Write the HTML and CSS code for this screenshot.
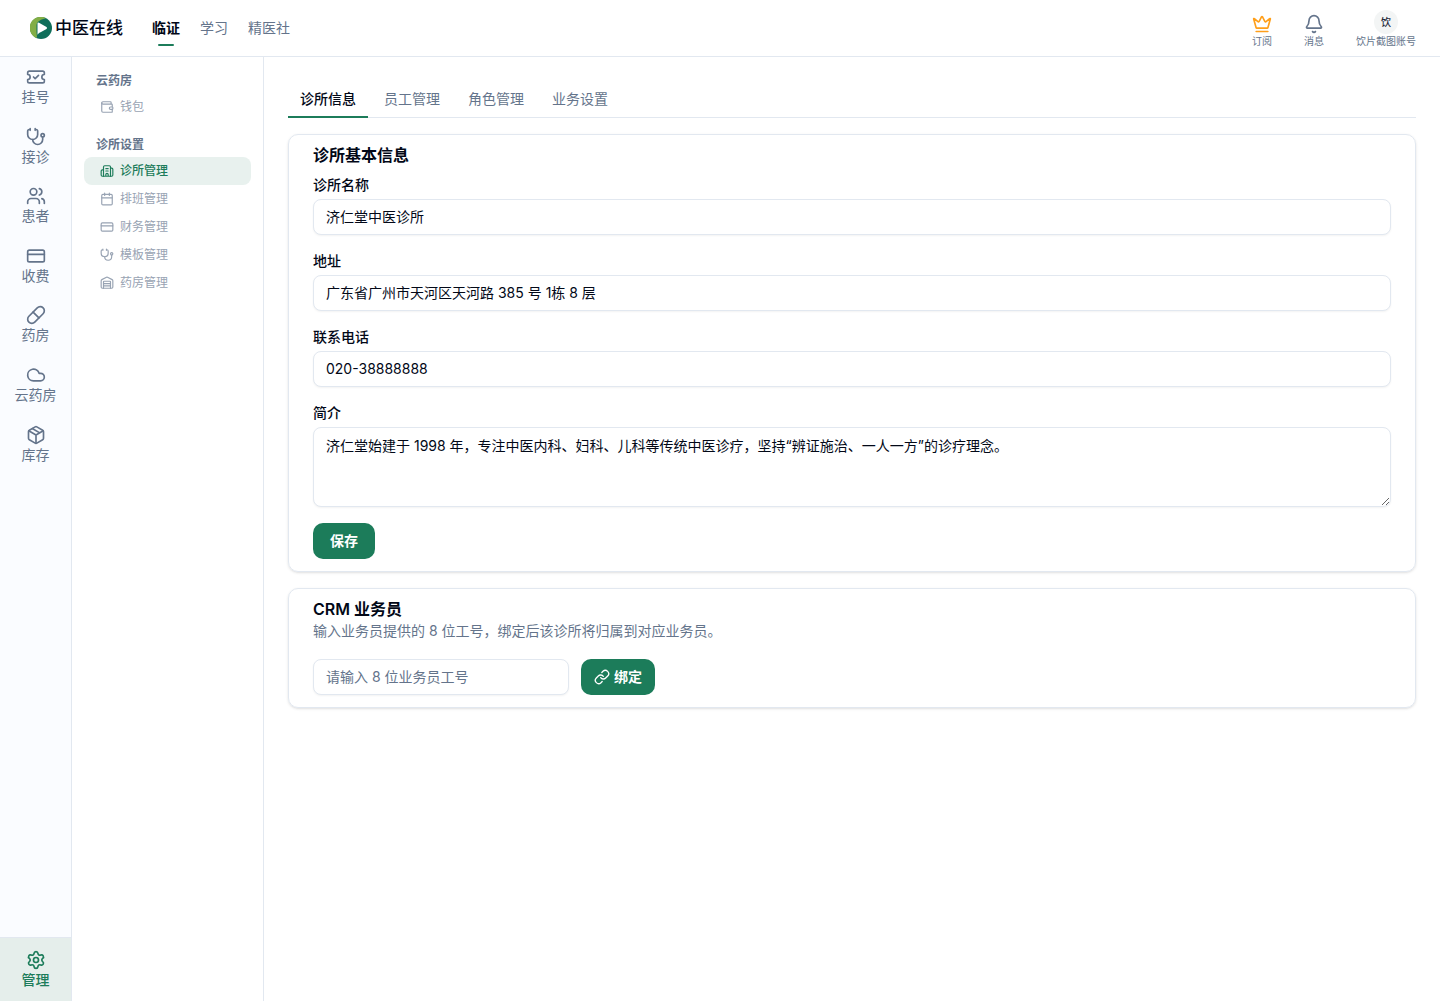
FILE: index.html
```html
<!DOCTYPE html>
<html lang="zh-CN">
<head>
<meta charset="utf-8">
<meta name="viewport" content="width=device-width, initial-scale=1">
<title>中医在线</title>
<link rel="stylesheet" href="styles.css">
</head>
<body>
<svg class="sprite" aria-hidden="true">
  <symbol id="i-ticket" viewBox="0 0 24 24"><path d="M2 9a3 3 0 1 1 0 6v2a2 2 0 0 0 2 2h16a2 2 0 0 0 2-2v-2a3 3 0 1 1 0-6V7a2 2 0 0 0-2-2H4a2 2 0 0 0-2 2Z"/><path d="m9 12 2 2 4-4"/></symbol>
  <symbol id="i-steth" viewBox="0 0 24 24"><path d="M11 2v2M5 2v2M5 3H4a2 2 0 0 0-2 2v4a6 6 0 0 0 12 0V5a2 2 0 0 0-2-2h-1"/><path d="M8 15a6 6 0 0 0 12 0v-3"/><circle cx="20" cy="10" r="2"/></symbol>
  <symbol id="i-users" viewBox="0 0 24 24"><path d="M16 21v-2a4 4 0 0 0-4-4H6a4 4 0 0 0-4 4v2"/><circle cx="9" cy="7" r="4"/><path d="M16 3.128a4 4 0 0 1 0 7.744M22 21v-2a4 4 0 0 0-3-3.87" /></symbol>
  <symbol id="i-card" viewBox="0 0 24 24"><rect x="2" y="5" width="20" height="14" rx="2"/><path d="M2 10h20"/></symbol>
  <symbol id="i-pill" viewBox="0 0 24 24"><path d="m10.5 20.5 10-10a4.95 4.95 0 1 0-7-7l-10 10a4.95 4.95 0 1 0 7 7Z"/><path d="m8.5 8.5 7 7"/></symbol>
  <symbol id="i-cloud" viewBox="0 0 24 24"><path d="M17.5 19H9a7 7 0 1 1 6.71-9h1.79a4.5 4.5 0 1 1 0 9Z"/></symbol>
  <symbol id="i-package" viewBox="0 0 24 24"><path d="M11 21.73a2 2 0 0 0 2 0l7-4A2 2 0 0 0 21 16V8a2 2 0 0 0-1-1.73l-7-4a2 2 0 0 0-2 0l-7 4A2 2 0 0 0 3 8v8a2 2 0 0 0 1 1.73z"/><path d="M12 22V12M3.29 7 12 12l8.71-5M7.5 4.27l9 5.15"/></symbol>
  <symbol id="i-settings" viewBox="0 0 24 24"><path d="M9.671 4.136a2.34 2.34 0 0 1 4.659 0 2.34 2.34 0 0 0 3.319 1.915 2.34 2.34 0 0 1 2.33 4.033 2.34 2.34 0 0 0 0 3.831 2.34 2.34 0 0 1-2.33 4.033 2.34 2.34 0 0 0-3.319 1.915 2.34 2.34 0 0 1-4.659 0 2.34 2.34 0 0 0-3.32-1.915 2.34 2.34 0 0 1-2.33-4.033 2.34 2.34 0 0 0 0-3.831A2.34 2.34 0 0 1 6.35 6.051a2.34 2.34 0 0 0 3.319-1.915"/><circle cx="12" cy="12" r="3"/></symbol>
  <symbol id="i-wallet" viewBox="0 0 24 24"><path d="M19 7V4a1 1 0 0 0-1-1H5a2 2 0 0 0 0 4h15a1 1 0 0 1 1 1v4h-3a2 2 0 0 0 0 4h3a1 1 0 0 0 1-1v-2a1 1 0 0 0-1-1"/><path d="M3 5v14a2 2 0 0 0 2 2h15a1 1 0 0 0 1-1v-4"/></symbol>
  <symbol id="i-building" viewBox="0 0 24 24"><path d="M10 12h4M10 8h4M14 21v-3a2 2 0 0 0-4 0v3M6 10H4a2 2 0 0 0-2 2v7a2 2 0 0 0 2 2h16a2 2 0 0 0 2-2V9a2 2 0 0 0-2-2h-2"/><path d="M6 21V5a2 2 0 0 1 2-2h8a2 2 0 0 1 2 2v16"/></symbol>
  <symbol id="i-calendar" viewBox="0 0 24 24"><path d="M8 2v4M16 2v4M3 10h18"/><rect x="3" y="4" width="18" height="18" rx="2"/></symbol>
  <symbol id="i-warehouse" viewBox="0 0 24 24"><path d="M18 21V10a1 1 0 0 0-1-1H7a1 1 0 0 0-1 1v11"/><path d="M22 19a2 2 0 0 1-2 2H4a2 2 0 0 1-2-2V8a2 2 0 0 1 1.132-1.803l7.95-3.974a2 2 0 0 1 1.837 0l7.948 3.974A2 2 0 0 1 22 8z"/><path d="M6 13h12M6 17h12"/></symbol>
  <symbol id="i-crown" viewBox="0 0 24 24"><path d="M11.562 3.266a.5.5 0 0 1 .876 0L15.39 8.87a1 1 0 0 0 1.516.294L21.183 5.5a.5.5 0 0 1 .798.519l-2.834 10.246a1 1 0 0 1-.956.734H5.81a1 1 0 0 1-.957-.734L2.02 6.02a.5.5 0 0 1 .798-.519l4.276 3.664a1 1 0 0 0 1.516-.294z"/><path d="M5 21h14"/></symbol>
  <symbol id="i-bell" viewBox="0 0 24 24"><path d="M10.268 21a2 2 0 0 0 3.464 0"/><path d="M3.262 15.326A1 1 0 0 0 4 17h16a1 1 0 0 0 .74-1.673C19.41 13.956 18 12.499 18 8A6 6 0 0 0 6 8c0 4.499-1.411 5.956-2.738 7.326"/></symbol>
  <symbol id="i-link" viewBox="0 0 24 24"><path d="M10 13a5 5 0 0 0 7.54.54l3-3a5 5 0 0 0-7.07-7.07l-1.72 1.71"/><path d="M14 11a5 5 0 0 0-7.54-.54l-3 3a5 5 0 0 0 7.07 7.07l1.71-1.71"/></symbol>
</svg>

<header class="topbar">
  <a class="brand" href="#">
    <svg class="brand-logo" viewBox="1 1 22 22" aria-hidden="true">
      <circle cx="12" cy="12" r="11" fill="#0f6e5a"/>
      <path d="M17 2.200A11 11 0 1 0 7.500 22C8.500 20.500 7.500 18.500 7.500 16V9C8 5.500 12 3 17 2.200Z" fill="#82ae46"/>
      <path d="M8.500 7.600Q8.500 6 10 6.700L17.500 11Q18.700 12 17.500 13L12.500 15.800Q9.500 17 8.500 18.800Z" fill="#fff"/>
    </svg>
    <span>中医在线</span>
  </a>
  <nav class="topnav" aria-label="主导航">
    <a class="topnav-link is-active" href="#">临证</a>
    <a class="topnav-link" href="#">学习</a>
    <a class="topnav-link" href="#">精医社</a>
  </nav>
  <div class="actions">
    <button class="action" type="button"><svg class="icon icon-lg gold"><use href="#i-crown"/></svg><span>订阅</span></button>
    <button class="action" type="button"><svg class="icon icon-lg"><use href="#i-bell"/></svg><span>消息</span></button>
    <button class="action" type="button"><span class="avatar">饮</span><span>饮片截图账号</span></button>
  </div>
</header>

<div class="shell">
  <nav class="rail" aria-label="功能">
    <a class="rail-link" href="#"><svg class="icon icon-lg"><use href="#i-ticket"/></svg>挂号</a>
    <a class="rail-link" href="#"><svg class="icon icon-lg"><use href="#i-steth"/></svg>接诊</a>
    <a class="rail-link" href="#"><svg class="icon icon-lg"><use href="#i-users"/></svg>患者</a>
    <a class="rail-link" href="#"><svg class="icon icon-lg"><use href="#i-card"/></svg>收费</a>
    <a class="rail-link" href="#"><svg class="icon icon-lg"><use href="#i-pill"/></svg>药房</a>
    <a class="rail-link" href="#"><svg class="icon icon-lg"><use href="#i-cloud"/></svg>云药房</a>
    <a class="rail-link" href="#"><svg class="icon icon-lg"><use href="#i-package"/></svg>库存</a>
    <a class="rail-link rail-manage" href="#"><svg class="icon icon-lg"><use href="#i-settings"/></svg>管理</a>
  </nav>

  <nav class="side" aria-label="管理">
    <section class="side-group">
      <h2 class="side-title">云药房</h2>
      <a class="side-link" href="#"><svg class="icon icon-sm"><use href="#i-wallet"/></svg>钱包</a>
    </section>
    <section class="side-group">
      <h2 class="side-title">诊所设置</h2>
      <a class="side-link is-active" href="#"><svg class="icon icon-sm"><use href="#i-building"/></svg>诊所管理</a>
      <a class="side-link" href="#"><svg class="icon icon-sm"><use href="#i-calendar"/></svg>排班管理</a>
      <a class="side-link" href="#"><svg class="icon icon-sm"><use href="#i-card"/></svg>财务管理</a>
      <a class="side-link" href="#"><svg class="icon icon-sm"><use href="#i-steth"/></svg>模板管理</a>
      <a class="side-link" href="#"><svg class="icon icon-sm"><use href="#i-warehouse"/></svg>药房管理</a>
    </section>
  </nav>

  <main class="main">
    <div class="tabs" role="tablist">
      <button class="tab is-active" type="button" role="tab" aria-selected="true">诊所信息</button>
      <button class="tab" type="button" role="tab" aria-selected="false">员工管理</button>
      <button class="tab" type="button" role="tab" aria-selected="false">角色管理</button>
      <button class="tab" type="button" role="tab" aria-selected="false">业务设置</button>
    </div>

    <form class="card">
      <h1 class="card-title">诊所基本信息</h1>
      <div class="fields">
        <div class="field">
          <label for="name">诊所名称</label>
          <input class="control" id="name" type="text" value="济仁堂中医诊所">
        </div>
        <div class="field">
          <label for="address">地址</label>
          <input class="control" id="address" type="text" value="广东省广州市天河区天河路 385 号 1栋 8 层">
        </div>
        <div class="field">
          <label for="phone">联系电话</label>
          <input class="control" id="phone" type="tel" value="020-38888888">
        </div>
        <div class="field">
          <label for="intro">简介</label>
          <textarea class="control control-area" id="intro">济仁堂始建于 1998 年，专注中医内科、妇科、儿科等传统中医诊疗，坚持“辨证施治、一人一方”的诊疗理念。</textarea>
        </div>
        <button class="btn" type="submit">保存</button>
      </div>
    </form>

    <form class="card">
      <h2 class="card-title">CRM 业务员</h2>
      <p class="card-desc" id="crm-desc">输入业务员提供的 8 位工号，绑定后该诊所将归属到对应业务员。</p>
      <div class="bind-row">
        <input class="control control-code" type="text" placeholder="请输入 8 位业务员工号" aria-label="业务员工号" aria-describedby="crm-desc">
        <button class="btn btn-icon" type="submit"><svg class="icon icon-md"><use href="#i-link"/></svg>绑定</button>
      </div>
    </form>
  </main>
</div>
</body>
</html>
```

FILE: styles.css
```css
:root {
  --ink: #020817;
  --muted: #64748b;
  --faint: #98a3b3;
  --line: #e2e8f0;
  --green: #1c7c5a;
  --green-soft: #e8f1ee;
}

*, *::before, *::after { box-sizing: border-box; }

body {
  margin: 0;
  min-height: 100vh;
  display: flex;
  flex-direction: column;
  background: #fff;
  color: var(--ink);
  font: 14px/20px Inter, "Noto Sans CJK SC", sans-serif;
}

a { color: inherit; text-decoration: none; }
button, input, textarea { font: inherit; color: inherit; margin: 0; }
button { border: 0; background: none; padding: 0; cursor: pointer; }
h1, h2, p { margin: 0; }

.sprite { display: none; }

.icon {
  flex: none;
  fill: none;
  stroke: currentColor;
  stroke-width: 2;
  stroke-linecap: round;
  stroke-linejoin: round;
}
.icon-lg { width: 20px; height: 20px; }
.icon-md { width: 16px; height: 16px; }
.icon-sm { width: 14px; height: 14px; }
.gold { color: #ff9f1a; }

/* Top bar */
.topbar {
  display: flex;
  align-items: center;
  height: 57px;
  padding: 0 24px 0 30px;
  border-bottom: 1px solid var(--line);
}
.brand {
  display: flex;
  align-items: center;
  gap: 3px;
  margin-right: 29px;
  font-size: 17px;
  font-weight: 500;
}
.brand-logo { width: 22px; height: 22px; }
.topnav { display: flex; gap: 20px; height: 100%; }
.topnav-link {
  position: relative;
  display: flex;
  align-items: center;
  color: var(--muted);
}
.topnav-link.is-active { color: var(--ink); font-weight: 700; }
.topnav-link.is-active::after {
  content: "";
  position: absolute;
  left: 6px;
  right: 6px;
  bottom: 10px;
  height: 2px;
  border-radius: 1px;
  background: var(--green);
}
.actions { display: flex; gap: 32px; margin-left: auto; align-items: flex-end; }
.action {
  display: flex;
  flex-direction: column;
  align-items: center;
  gap: 1px;
  color: var(--muted);
  font-size: 10px;
  line-height: 12px;
}
.avatar {
  display: grid;
  place-items: center;
  width: 24px;
  height: 24px;
  border-radius: 50%;
  background: #f3f5f5;
  color: #1e293b;
  font-weight: 500;
}

/* Columns */
.shell { flex: 1; display: flex; }

.rail {
  flex: none;
  width: 72px;
  display: flex;
  flex-direction: column;
  border-right: 1px solid var(--line);
  background: #fafcff;
  color: var(--muted);
}
.rail-link {
  display: flex;
  flex-direction: column;
  align-items: center;
  padding: 10px 0;
  line-height: 1.4;
}
.rail-manage {
  margin-top: auto;
  padding: 12px 0;
  border-top: 1px solid var(--line);
  background: #e5eeeb;
  color: var(--green);
  font-weight: 500;
  line-height: 19px;
}

.side {
  flex: none;
  width: 192px;
  display: flex;
  flex-direction: column;
  gap: 12px;
  padding: 12px;
  border-right: 1px solid var(--line);
  font-size: 12px;
}
.side-title {
  padding: 2px 12px;
  color: var(--muted);
  font-size: 12px;
  font-weight: 600;
}
.side-link {
  display: flex;
  align-items: center;
  gap: 6px;
  height: 28px;
  padding: 0 16px;
  border-radius: 8px;
  color: var(--faint);
}
.side-link.is-active {
  background: var(--green-soft);
  color: var(--green);
  font-weight: 500;
}

.main {
  flex: 1;
  min-width: 0;
  display: flex;
  flex-direction: column;
  gap: 16px;
  padding: 24px;
}

.tabs {
  display: flex;
  gap: 4px;
  height: 37px;
  border-bottom: 1px solid var(--line);
}
.tab {
  position: relative;
  padding: 0 12px;
  color: var(--muted);
}
.tab.is-active { color: var(--ink); font-weight: 500; }
.tab.is-active::after {
  content: "";
  position: absolute;
  left: 0;
  right: 0;
  bottom: -1px;
  height: 2px;
  background: var(--green);
}

.card {
  padding: 8px 24px 12px;
  border: 1px solid var(--line);
  border-radius: 10px;
  box-shadow: 0 1px 3px rgb(0 0 0 / 10%), 0 1px 2px -1px rgb(0 0 0 / 10%);
}
.card-title {
  font-size: 16px;
  line-height: 24px;
  font-weight: 600;
}
.card-desc { color: var(--muted); }

.fields {
  display: flex;
  flex-direction: column;
  align-items: flex-start;
  gap: 16px;
  margin-top: 8px;
}
.field {
  width: 100%;
  display: flex;
  flex-direction: column;
  gap: 4px;
  font-weight: 500;
}
.control {
  display: block;
  width: 100%;
  height: 36px;
  padding: 0 12px 2px;
  border: 1px solid var(--line);
  border-radius: 8px;
  background: #fff;
  box-shadow: 0 1px 2px rgb(0 0 0 / 5%);
  font-weight: 400;
}
.control::placeholder { color: var(--muted); opacity: 1; }
.control-area { height: 80px; padding: 8px 12px; resize: vertical; }
.control-code { width: 256px; }

.btn {
  display: flex;
  align-items: center;
  justify-content: center;
  gap: 4px;
  min-width: 62px;
  height: 36px;
  padding: 0 16px;
  border-radius: 10px;
  background: var(--green);
  color: #fff;
  font-weight: 700;
}
.btn-icon { padding: 0 13px; }
.bind-row { display: flex; gap: 12px; margin-top: 18px; }
```
